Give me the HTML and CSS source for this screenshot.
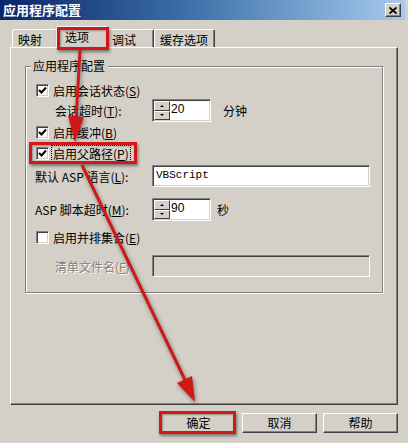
FILE: index.html
```html
<!DOCTYPE html>
<html>
<head>
	<meta charset="UTF-8">
	<title>应用程序配置</title>
	<link rel="stylesheet" href="styles.css">
</head>
<body>
	<div class="window">
		<div class="titlebar">
			<span class="title">应用程序配置</span>
			<span class="close">
				<svg width="8" height="7" viewBox="0 0 8 7"><path d="M0.5 0.5 L7.5 6.5 M7.5 0.5 L0.5 6.5" stroke="#000" stroke-width="1.8"/></svg>
			</span>
		</div>
		<div class="tabs">
			<span class="tab tab-map">映射</span>
			<span class="tab tab-on">选项</span>
			<span class="tab tab-debug">调试</span>
			<span class="tab tab-cache">缓存选项</span>
		</div>
		<div class="panel">
			<div class="group">
				<div class="legend">应用程序配置</div>
				<div class="rows">
					<div class="row">
						<span class="check"><svg width="9" height="9" viewBox="0 0 9 9"><path d="M1 4 L3.5 6.5 L8 1.5" fill="none" stroke="#000" stroke-width="2"/></svg></span>
						<span class="text">启用会话状态(<u>S</u>)</span>
					</div>
					<div class="row">
						<span class="label indent">会话超时(<u>T</u>):</span>
						<span class="spin">
							<span class="spin-btns"><span class="up"></span><span class="down"></span></span>
							<span class="spin-value">20</span>
						</span>
						<span class="unit">分钟</span>
					</div>
					<div class="row">
						<span class="check"><svg width="9" height="9" viewBox="0 0 9 9"><path d="M1 4 L3.5 6.5 L8 1.5" fill="none" stroke="#000" stroke-width="2"/></svg></span>
						<span class="text">启用缓冲(<u>B</u>)</span>
					</div>
					<div class="row">
						<span class="check"><svg width="9" height="9" viewBox="0 0 9 9"><path d="M1 4 L3.5 6.5 L8 1.5" fill="none" stroke="#000" stroke-width="2"/></svg></span>
						<span class="text focus">启用父路径(<u>P</u>)</span>
					</div>
					<div class="row">
						<span class="label">默认 ASP 语言(<u>L</u>):</span>
						<span class="field">VBScript</span>
					</div>
					<div class="row">
						<span class="label">ASP 脚本超时(<u>M</u>):</span>
						<span class="spin">
							<span class="spin-btns"><span class="up"></span><span class="down"></span></span>
							<span class="spin-value">90</span>
						</span>
						<span class="unit unit-sec">秒</span>
					</div>
					<div class="row">
						<span class="check"></span>
						<span class="text">启用并排集合(<u>E</u>)</span>
					</div>
					<div class="row">
						<span class="label indent disabled">清单文件名(<u>F</u>):</span>
						<span class="field field-off"></span>
					</div>
				</div>
			</div>
		</div>
		<div class="buttons">
			<span class="btn">确定</span>
			<span class="btn">取消</span>
			<span class="btn">帮助</span>
		</div>

		<!-- red annotations -->
		<div class="mark mark-tab"></div>
		<div class="mark mark-path"></div>
		<div class="mark mark-ok"></div>
		<svg class="arrows" width="408" height="443" viewBox="0 0 408 443">
			<g fill="#d01818" stroke="#d01818">
				<line x1="80" y1="50" x2="76" y2="120" stroke-width="3"/>
				<polygon points="68,116 84,117 75,142" stroke="none"/>
				<line x1="82" y1="165" x2="186" y2="382" stroke-width="3"/>
				<polygon points="177,383 192,376 195,402" stroke="none"/>
			</g>
		</svg>
	</div>
</body>
</html>
```

FILE: styles.css
```css
body{
	margin:0;
	background:#d4d0c8;
	font:12px "Noto Sans CJK SC", "Liberation Sans", sans-serif;
	color:#000;
}
.window{
	position:relative;
	width:408px;
	height:443px;
	background:#d4d0c8;
	overflow:hidden;
}
.titlebar{
	display:flex;
	align-items:center;
	justify-content:space-between;
	width:405px;
	height:20px;
	padding:0 4px 0 3px;
	box-sizing:border-box;
	background:linear-gradient(to right,#0a246a,#3a6ea5 45%,#a6caf0);
}
.title{
	color:#fff;
	font-weight:bold;
	font-size:13px;
	line-height:20px;
}
.close{
	display:flex;
	align-items:center;
	justify-content:center;
	width:16px;
	height:14px;
	box-sizing:border-box;
	background:#d4d0c8;
	border:1px solid;
	border-color:#fff #404040 #404040 #fff;
	box-shadow:inset -1px -1px #808080;
}

/* tabs */
.tabs{
	display:flex;
	align-items:flex-end;
	height:21px;
	margin-top:6px;
	padding-left:12px;
}
.tab{
	display:flex;
	align-items:center;
	height:18px;
	padding:3px 0 0 5px;
	box-sizing:border-box;
	border:1px solid;
	border-bottom:none;
	border-color:#fff #404040 transparent #fff;
	border-radius:2px 2px 0 0;
	box-shadow:inset -1px 0 #808080;
	line-height:14px;
	background:#d4d0c8;
}
.tab-map{ width:46px; }
.tab-on{
	position:relative;
	z-index:1;
	width:52px;
	height:22px;
	margin:0 -2px -1px;
	padding:0 0 1px 8px;
}
.tab-debug{ width:48px; }
.tab-cache{ width:61px; }

.panel{
	width:388px;
	height:358px;
	margin-left:10px;
	padding:18px 14px 0;
	box-sizing:border-box;
	border:1px solid;
	border-color:#fff #404040 #404040 #fff;
	box-shadow:inset -1px -1px #808080;
}
.group{
	height:227px;
	padding-left:9px;
	box-sizing:border-box;
	border:1px solid #808080;
	box-shadow:1px 1px 0 #fff, inset 1px 1px 0 #fff;
}
.legend{
	width:fit-content;
	margin:-8px 0 0 -4px;
	padding:0 3px 0 2px;
	line-height:14px;
	background:#d4d0c8;
}
.rows{
	display:grid;
	grid-template-rows:15px 27px 21px 18px 33px 33px 24px 22px;
	margin-top:11px;
}
.row{
	display:flex;
	align-items:center;
	align-self:start;
	line-height:13px;
}
.check{
	display:flex;
	align-items:center;
	justify-content:center;
	width:13px;
	height:13px;
	margin:0 4px 0 1px;
	box-sizing:border-box;
	background:#fff;
	border:1px solid;
	border-color:#808080 #fff #fff #808080;
	box-shadow:inset 1px 1px #404040, inset -1px -1px #d4d0c8;
}
.focus{
	outline:1px dotted #000;
	outline-offset:1px;
}
.label{
	width:117px;
	box-sizing:border-box;
}
.indent{ padding-left:20px; }
.disabled{
	color:#808080;
	text-shadow:1px 1px #fff;
}

/* spinner */
.spin{
	display:flex;
	align-items:flex-start;
	width:59px;
	height:23px;
	padding:1px;
	box-sizing:border-box;
	background:#fff;
	border:1px solid;
	border-color:#808080 #fff #fff #808080;
	box-shadow:inset 1px 1px #404040, inset -1px -1px #d4d0c8;
}
.spin-btns{
	display:flex;
	flex-direction:column;
	width:16px;
	height:19px;
}
.spin-btns span{
	display:flex;
	align-items:center;
	justify-content:center;
	flex:1;
	background:#d4d0c8;
	border:1px solid;
	border-color:#fff #404040 #404040 #fff;
}
.spin-btns .up:after,
.spin-btns .down:after{
	content:'';
	border-left:2px solid transparent;
	border-right:2px solid transparent;
}
.spin-btns .up:after{ border-bottom:2px solid #000; }
.spin-btns .down:after{ border-top:2px solid #000; }
.spin-value{
	padding:1px 0 0 1px;
	font-family:"Liberation Sans", sans-serif;
	line-height:14px;
}
.unit{ margin-left:12px; }
.unit-sec{ margin-left:6px; }

.field{
	display:flex;
	align-items:center;
	width:218px;
	height:22px;
	padding:0 3px 2px;
	box-sizing:border-box;
	background:#fff;
	border:1px solid;
	border-color:#808080 #fff #fff #808080;
	box-shadow:inset 1px 1px #404040, inset -1px -1px #d4d0c8;
	font:11px "Liberation Mono", monospace;
}
.field-off{ background:#d4d0c8; }

.buttons{
	display:flex;
	justify-content:flex-end;
	gap:6px;
	margin-top:8px;
	padding-right:10px;
}
.btn{
	display:flex;
	align-items:center;
	justify-content:center;
	width:75px;
	height:20px;
	box-sizing:border-box;
	border:1px solid;
	border-color:#fff #404040 #404040 #fff;
	box-shadow:inset -1px -1px #808080;
	line-height:14px;
}

/* annotations */
.mark{
	position:absolute;
	z-index:5;
	box-sizing:border-box;
	border:3px solid #d01818;
	box-shadow:1px 2px 3px rgba(0,0,0,0.45), inset 1px 1px 2px rgba(0,0,0,0.3);
}
.mark-tab{ left:57px; top:27px; width:52px; height:23px; }
.mark-path{ left:29px; top:142px; width:108px; height:22px; }
.mark-ok{ left:159px; top:411px; width:77px; height:23px; }
.arrows{
	position:absolute;
	left:0;
	top:0;
	z-index:6;
	filter:drop-shadow(1px 2px 2px rgba(0,0,0,0.45));
}
```
